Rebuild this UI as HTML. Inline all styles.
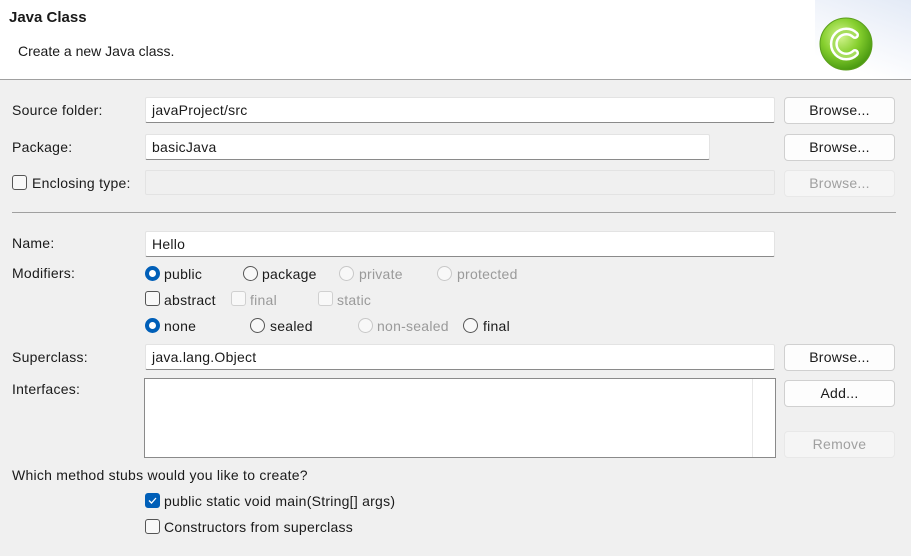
<!DOCTYPE html><html><head><style>
*{margin:0;padding:0;box-sizing:border-box}
body{width:911px;height:556px;background:#f0f0f0;font-family:"Liberation Sans",sans-serif;font-size:14px;color:#1a1a1a;position:relative;overflow:hidden}
.a{position:absolute;white-space:nowrap;line-height:18px;letter-spacing:.25px}
.hdr{position:absolute;left:0;top:0;width:911px;height:80px;background:#fff;border-bottom:1px solid #a0a0a0}
.in{position:absolute;background:#fff;border:1px solid #e3e3e3;border-bottom:1px solid #8a8a8a;padding-left:6px;line-height:24px;border-radius:2px;letter-spacing:.25px}
.btn{position:absolute;left:784px;width:111px;height:27px;background:#fdfdfd;border:1px solid #d0d0d0;border-radius:4px;text-align:center;line-height:25px;letter-spacing:.25px}
.dis{background:#f5f5f5;border-color:#e8e8e8;color:#a0a0a0}
.r{position:absolute;width:15px;height:15px;border-radius:50%;border:1px solid #555;background:#f8f8f8}
.r.on{background:#fff;border:4px solid #005fb8}
.r.d{border-color:#c8c8c8}
.c{position:absolute;width:15px;height:15px;border-radius:3px;border:1px solid #555;background:#f8f8f8}
.c.d{border-color:#d0d0d0}
.g{color:#9a9a9a}
</style></head><body>
<div class="hdr"></div>
<div style="position:absolute;left:815px;top:0;width:96px;height:79px;background:linear-gradient(200deg,#e3eaf6 0%,#f2f5fb 40%,#fff 80%)"></div>
<svg style="position:absolute;left:818px;top:16px" width="56" height="56" viewBox="0 0 56 56">
<defs><radialGradient id="g" cx="40%" cy="35%" r="65%"><stop offset="0" stop-color="#d4f590"/><stop offset=".55" stop-color="#86cf2e"/><stop offset="1" stop-color="#4c9c12"/></radialGradient></defs>
<circle cx="28" cy="28" r="26" fill="url(#g)" stroke="#5a9e1c" stroke-width="1"/>
<path d="M37 19 A12.5 12.5 0 1 0 37 37" fill="none" stroke="#fff" stroke-width="8" stroke-linecap="round"/>
<path d="M37 19 A12.5 12.5 0 1 0 37 37" fill="none" stroke="#a6dd5c" stroke-width="3" stroke-linecap="round"/>
</svg>
<div class="a" style="left:9px;top:9px;font-weight:bold;font-size:15px;letter-spacing:0">Java Class</div>
<div class="a" style="left:18px;top:42px;letter-spacing:0">Create a new Java class.</div>

<div class="a" style="left:12px;top:101px">Source folder:</div>
<div class="in" style="left:145px;top:97px;width:630px;height:26px">javaProject/src</div>
<div class="btn" style="top:97px">Browse...</div>
<div class="a" style="left:12px;top:138px">Package:</div>
<div class="in" style="left:145px;top:134px;width:565px;height:26px">basicJava</div>
<div class="btn" style="top:134px">Browse...</div>
<div class="c" style="left:12px;top:175px"></div>
<div class="a" style="left:32px;top:174px">Enclosing type:</div>
<div class="in" style="left:145px;top:170px;width:630px;height:25px;background:#f0f0f0;border-color:#e3e3e3"></div>
<div class="btn dis" style="top:170px">Browse...</div>
<div style="position:absolute;left:12px;top:212px;width:884px;height:1px;background:#a0a0a0"></div>

<div class="a" style="left:12px;top:234px">Name:</div>
<div class="in" style="left:145px;top:231px;width:630px;height:26px">Hello</div>
<div class="a" style="left:12px;top:264px">Modifiers:</div>
<div class="r on" style="left:145px;top:266px"></div><div class="a" style="left:164px;top:265px">public</div>
<div class="r" style="left:243px;top:266px"></div><div class="a" style="left:262px;top:265px">package</div>
<div class="r d" style="left:339px;top:266px"></div><div class="a g" style="left:359px;top:265px">private</div>
<div class="r d" style="left:437px;top:266px"></div><div class="a g" style="left:457px;top:265px">protected</div>
<div class="c" style="left:145px;top:291px"></div><div class="a" style="left:164px;top:291px">abstract</div>
<div class="c d" style="left:231px;top:291px"></div><div class="a g" style="left:250px;top:291px">final</div>
<div class="c d" style="left:318px;top:291px"></div><div class="a g" style="left:337px;top:291px">static</div>
<div class="r on" style="left:145px;top:318px"></div><div class="a" style="left:164px;top:317px">none</div>
<div class="r" style="left:250px;top:318px"></div><div class="a" style="left:270px;top:317px">sealed</div>
<div class="r d" style="left:358px;top:318px"></div><div class="a g" style="left:377px;top:317px">non-sealed</div>
<div class="r" style="left:463px;top:318px"></div><div class="a" style="left:483px;top:317px">final</div>

<div class="a" style="left:12px;top:348px">Superclass:</div>
<div class="in" style="left:145px;top:344px;width:630px;height:26px">java.lang.Object</div>
<div class="btn" style="top:344px">Browse...</div>
<div class="a" style="left:12px;top:380px">Interfaces:</div>
<div style="position:absolute;left:144px;top:378px;width:632px;height:80px;background:#fff;border:1px solid #8a8a8a"></div>
<div style="position:absolute;left:752px;top:379px;width:1px;height:78px;background:#e8e8e8"></div>
<div class="btn" style="top:380px">Add...</div>
<div class="btn dis" style="top:431px">Remove</div>

<div class="a" style="left:12px;top:466px">Which method stubs would you like to create?</div>
<div class="c" style="left:145px;top:493px;background:#005fb8;border-color:#005fb8"></div>
<svg style="position:absolute;left:145px;top:493px" width="15" height="15"><path d="M4 7.5l2.5 2.5 4.5-5" fill="none" stroke="#fff" stroke-width="1.3"/></svg>
<div class="a" style="left:164px;top:492px">public static void main(String[] args)</div>
<div class="c" style="left:145px;top:519px"></div>
<div class="a" style="left:164px;top:518px">Constructors from superclass</div>
</body></html>
